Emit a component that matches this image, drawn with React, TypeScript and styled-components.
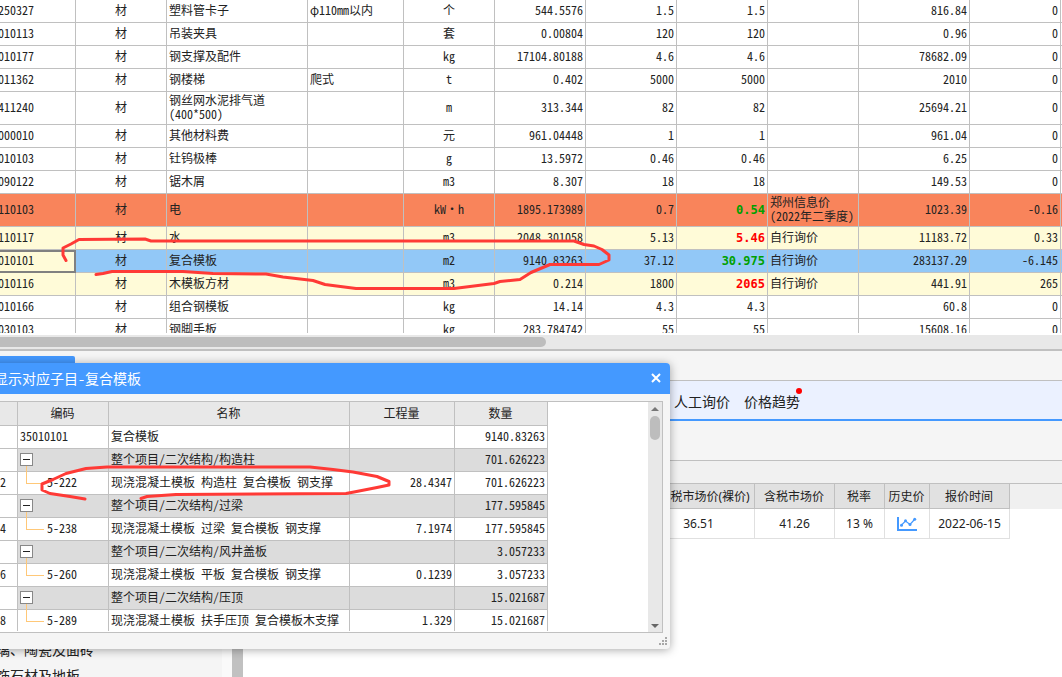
import React from "react";
import styled, { createGlobalStyle, css } from "styled-components";

const line = "#c0c0c0";
const blue = "#4499ff";
const gridFont = `"Noto Sans Mono CJK SC", "Liberation Mono", "Noto Sans CJK SC", monospace`;

const GlobalStyle = createGlobalStyle`
  * { box-sizing: border-box; }
  body { margin: 0; overflow: hidden; background: #fff; }
  button { font: inherit; padding: 0; cursor: pointer; }
  table { border-collapse: separate; border-spacing: 0; table-layout: fixed; }
`;

const Page = styled.main`
  position: relative;
  display: flex;
  flex-direction: column;
  height: 100vh;
  min-height: 660px;
  overflow: hidden;
  color: #222;
  font: 12px/14px ${gridFont};
`;

/* ---------- material grid ---------- */

const GridPane = styled.section`
  flex: none;
  height: 351px;
  display: flex;
  flex-direction: column;
  border-bottom: 2px solid ${line};
  background: #fff;
`;

const GridClip = styled.div`
  height: 333px;
  margin-bottom: 2px;
  overflow: hidden;
`;

const MaterialTable = styled.table`
  width: calc(100% + 4px);
  margin-left: -4px;
`;

type Tone = "plain" | "orange" | "yellow" | "selected";
const tones: Record<Tone, string> = {
  plain: "#ffffff",
  orange: "#f9845b",
  yellow: "#fffbd8",
  selected: "#92c8f7",
};

const MaterialRow = styled.tr<{ $tone: Tone; $tall?: boolean }>`
  height: ${(p) => (p.$tall ? 33 : 23)}px;
  background: ${(p) => tones[p.$tone]};
`;

const Cell = styled.td<{ $align?: "left" | "center" | "right"; $active?: boolean }>`
  padding: 0 2px 2px;
  border-right: 1px solid ${line};
  border-bottom: 1px solid ${line};
  text-align: ${(p) => p.$align ?? "left"};
  white-space: pre;
  ${(p) =>
    p.$active &&
    css`
      background: ${tones.yellow};
      outline: 2px solid #808080;
      outline-offset: -2px;
    `}
`;

const Filler = styled.td`
  padding: 0;
  border-bottom: 1px solid ${line};
`;

const Price = styled.strong<{ $up: boolean }>`
  font: bold 12px/14px "DejaVu Sans Mono", "Liberation Mono", monospace;
  color: ${(p) => (p.$up ? "#ff0000" : "#00a000")};
`;

const HTrack = styled.div`
  flex: 1;
  padding: 2px 0;
  background: #e8e8e8;
`;

const HThumb = styled.div`
  width: 546px;
  height: 10px;
  border-radius: 0 5px 5px 0;
  background: #bdbdbd;
`;

interface Material {
  code: string;
  name: string;
  spec?: string;
  unit: string;
  qty: string;
  budget: string;
  market: string;
  trend?: "up" | "down";
  source?: string;
  total: string;
  diff: string;
  tone?: Tone;
  tall?: boolean;
}

const materials: Material[] = [
  { code: "250327", name: "塑料管卡子", spec: "φ110mm以内", unit: "个", qty: "544.5576", budget: "1.5", market: "1.5", total: "816.84", diff: "0" },
  { code: "010113", name: "吊装夹具", unit: "套", qty: "0.00804", budget: "120", market: "120", total: "0.96", diff: "0" },
  { code: "010177", name: "钢支撑及配件", unit: "kg", qty: "17104.80188", budget: "4.6", market: "4.6", total: "78682.09", diff: "0" },
  { code: "011362", name: "钢楼梯", spec: "爬式", unit: "t", qty: "0.402", budget: "5000", market: "5000", total: "2010", diff: "0" },
  { code: "411240", name: "钢丝网水泥排气道\n(400*500)", unit: "m", qty: "313.344", budget: "82", market: "82", total: "25694.21", diff: "0", tall: true },
  { code: "000010", name: "其他材料费", unit: "元", qty: "961.04448", budget: "1", market: "1", total: "961.04", diff: "0" },
  { code: "010103", name: "钍钨极棒", unit: "g", qty: "13.5972", budget: "0.46", market: "0.46", total: "6.25", diff: "0" },
  { code: "090122", name: "锯木屑", unit: "m3", qty: "8.307", budget: "18", market: "18", total: "149.53", diff: "0" },
  { code: "110103", name: "电", unit: "kW·h", qty: "1895.173989", budget: "0.7", market: "0.54", trend: "down", source: "郑州信息价\n(2022年二季度)", total: "1023.39", diff: "-0.16", tone: "orange", tall: true },
  { code: "110117", name: "水", unit: "m3", qty: "2048.301058", budget: "5.13", market: "5.46", trend: "up", source: "自行询价", total: "11183.72", diff: "0.33", tone: "yellow" },
  { code: "010101", name: "复合模板", unit: "m2", qty: "9140.83263", budget: "37.12", market: "30.975", trend: "down", source: "自行询价", total: "283137.29", diff: "-6.145", tone: "selected" },
  { code: "010116", name: "木模板方材", unit: "m3", qty: "0.214", budget: "1800", market: "2065", trend: "up", source: "自行询价", total: "441.91", diff: "265", tone: "yellow" },
  { code: "010166", name: "组合钢模板", unit: "kg", qty: "14.14", budget: "4.3", market: "4.3", total: "60.8", diff: "0" },
  { code: "030103", name: "钢脚手板", unit: "kg", qty: "283.784742", budget: "55", market: "55", total: "15608.16", diff: "0" },
];

function Materials() {
  return (
    <GridPane>
      <GridClip>
        <MaterialTable>
          <colgroup>
            {[80, 91, 141, 96, 91, 91, 91, 91, 91, 111, 91].map((w, i) => (
              <col key={i} width={w} />
            ))}
            <col />
          </colgroup>
          <tbody>
            {materials.map((m) => (
              <MaterialRow key={m.code} $tone={m.tone ?? "plain"} $tall={m.tall}>
                <Cell $active={m.tone === "selected"}>{m.code}</Cell>
                <Cell $align="center">材</Cell>
                <Cell>{m.name}</Cell>
                <Cell>{m.spec}</Cell>
                <Cell $align="center">{m.unit}</Cell>
                <Cell $align="right">{m.qty}</Cell>
                <Cell $align="right">{m.budget}</Cell>
                <Cell $align="right">
                  {m.trend ? <Price $up={m.trend === "up"}>{m.market}</Price> : m.market}
                </Cell>
                <Cell>{m.source}</Cell>
                <Cell $align="right">{m.total}</Cell>
                <Cell $align="right">{m.diff}</Cell>
                <Filler />
              </MaterialRow>
            ))}
          </tbody>
        </MaterialTable>
      </GridClip>
      <HTrack>
        <HThumb />
      </HTrack>
    </GridPane>
  );
}

/* ---------- lower workspace ---------- */

const Workspace = styled.section`
  flex: 1;
  min-height: 0;
  display: flex;
  background: #f5f5f5;
  font: 12px/16px "Noto Sans", "Noto Sans CJK SC", sans-serif;
`;

const Sidebar = styled.aside`
  flex: none;
  width: 243px;
  padding-top: 5px;
  display: grid;
  grid-template: 30px 1fr / 222px 10px 11px;
  overflow: hidden;
`;

const SideTab = styled.button`
  grid-column: 1 / -1;
  width: 75px;
  border: 0;
  border-radius: 0 2px 0 0;
  background: ${blue};
`;

const Categories = styled.ul`
  margin: 0 0 0 -18px;
  padding: 250px 0 0;
  list-style: none;
  font: 14px/26px "Noto Sans CJK SC", sans-serif;
  white-space: nowrap;
`;

const SideGap = styled.div`
  background: #fafafa;
`;

const SideThumb = styled.div`
  background: #c1c1c1;
`;

const Inquiry = styled.div`
  flex: 1;
  min-width: 0;
  padding-top: 29px;
  display: flex;
  flex-direction: column;
`;

const Tabs = styled.nav`
  display: flex;
  gap: 14px;
  height: 41px;
  padding-top: 2px;
  padding-left: 431px;
  border-top: 1px solid ${line};
  border-bottom: 2px solid ${blue};
  background: #ebf1ff;
`;

const Tab = styled.button`
  position: relative;
  border: 0;
  background: none;
  color: #222;
  font: 14px/20px "Noto Sans CJK SC", sans-serif;
  white-space: nowrap;
`;

const Dot = styled.span`
  position: absolute;
  top: 5px;
  right: -2px;
  width: 6px;
  height: 6px;
  border-radius: 50%;
  background: #ff0000;
`;

const ToolStrip = styled.div`
  height: 39px;
`;

const InfoStrip = styled.div`
  height: 23px;
  border-top: 1px solid ${line};
  background: #f1f1f1;
`;

const PriceArea = styled.div`
  flex: 1;
  background: linear-gradient(#f0f0f0 25px, #fff 25px);
  border-top: 1px solid ${line};
  overflow: hidden;
`;

const PriceTable = styled.table`
  width: 367px;
  margin-left: 400px;
  text-align: center;
`;

const PriceHead = styled.th`
  height: 25px;
  padding: 2px 1px 0 0;
  border-right: 1px solid ${line};
  border-bottom: 1px solid ${line};
  background: #e1e1e1;
  font-weight: normal;
  white-space: nowrap;
`;

const PriceCell = styled.td`
  height: 30px;
  padding: 0;
  border-right: 1px solid #e0e0e0;
  border-bottom: 1px solid #e0e0e0;
  background: #fff;
`;

const IconButton = styled.button`
  display: inline-flex;
  vertical-align: middle;
  border: 0;
  background: none;
`;

function ChartIcon() {
  return (
    <svg width="20" height="15" viewBox="0 0 20 15" fill="none" stroke={blue}>
      <path d="M1 0V13H20" strokeWidth="2" />
      <path d="M4.500 8L8.500 4L13 7.500L17.500 2.500" strokeWidth="1.200" />
      <g fill={blue} stroke="none">
        <circle cx="4.500" cy="8.200" r="1.500" />
        <circle cx="8.500" cy="3.800" r="1.500" />
        <circle cx="13" cy="7.500" r="1.500" />
        <circle cx="17.700" cy="2.300" r="1.500" />
      </g>
    </svg>
  );
}

function Lower() {
  return (
    <Workspace>
      <Sidebar>
        <SideTab aria-label="材料分类" />
        <Categories>
          <li>玻璃、陶瓷及面砖</li>
          <li>装饰石材及地板</li>
        </Categories>
        <SideGap />
        <SideThumb />
      </Sidebar>
      <Inquiry>
        <Tabs>
          <Tab>人工询价</Tab>
          <Tab>
            价格趋势
            <Dot />
          </Tab>
        </Tabs>
        <ToolStrip />
        <InfoStrip />
        <PriceArea>
          <PriceTable>
            <colgroup>
              {[112, 80, 50, 45, 80].map((w, i) => (
                <col key={i} width={w} />
              ))}
            </colgroup>
            <thead>
              <tr>
                <PriceHead>不含税市场价(裸价)</PriceHead>
                <PriceHead>含税市场价</PriceHead>
                <PriceHead>税率</PriceHead>
                <PriceHead>历史价</PriceHead>
                <PriceHead>报价时间</PriceHead>
              </tr>
            </thead>
            <tbody>
              <tr>
                <PriceCell>36.51</PriceCell>
                <PriceCell>41.26</PriceCell>
                <PriceCell>13 %</PriceCell>
                <PriceCell>
                  <IconButton aria-label="历史价">
                    <ChartIcon />
                  </IconButton>
                </PriceCell>
                <PriceCell>2022-06-15</PriceCell>
              </tr>
            </tbody>
          </PriceTable>
        </PriceArea>
      </Inquiry>
    </Workspace>
  );
}

/* ---------- floating dialog ---------- */

const Dialog = styled.section`
  position: absolute;
  top: 363px;
  left: -20px;
  width: 690px;
  height: 286px;
  display: flex;
  flex-direction: column;
  border-radius: 4px;
  background: #f5f5f5;
  box-shadow: 0 1px 10px rgba(0, 0, 0, 0.35);
`;

const TitleBar = styled.header`
  display: flex;
  align-items: center;
  justify-content: space-between;
  height: 31px;
  padding: 0 9px 2px 14px;
  border-radius: 4px 4px 0 0;
  background: ${blue};
  color: #fff;
`;

const Title = styled.h2`
  margin: 0;
  font: 14px/20px ${gridFont};
`;

const CloseButton = styled.button`
  display: flex;
  border: 0;
  background: none;
`;

const DialogBody = styled.div`
  display: flex;
  justify-content: space-between;
  height: 232px;
  margin: 7px 7px 0 0;
  border: 1px solid ${line};
  background: #fff;
`;

const SubClip = styled.div`
  height: 229px;
  overflow: hidden;
`;

const SubTable = styled.table`
  width: 567px;
`;

const SubHead = styled.th`
  height: 24px;
  padding: 0 1px 2px 0;
  border-right: 1px solid ${line};
  border-bottom: 1px solid ${line};
  background: #e8e8e8;
  font-weight: normal;
`;

const SubRow = styled.tr<{ $group: boolean }>`
  height: 23px;
  background: ${(p) => (p.$group ? "#dcdcdc" : "#fff")};
`;

const RowNo = styled(Cell)`
  padding-right: 11px;
  background: #fff;
`;

const TreeChild = styled.div`
  position: relative;
  padding-left: 27px;

  &::before {
    content: "";
    position: absolute;
    left: 6px;
    top: -9px;
    width: 17px;
    height: 17px;
    border: solid #ffc878;
    border-width: 0 0 1px 1px;
  }
`;

const Toggle = styled.button`
  display: flex;
  width: 13px;
  height: 13px;
  align-items: center;
  justify-content: center;
  border: 1px solid #888;
  background: #fff;

  &::before {
    content: "";
    width: 7px;
    height: 1px;
    background: #222;
  }
`;

const VTrack = styled.div`
  display: flex;
  flex-direction: column;
  align-items: center;
  width: 14px;
  padding: 5px 0 4px;
  background: #e8e8e8;
`;

const VThumb = styled.div`
  width: 10px;
  height: 24px;
  margin: 5px 0 auto;
  border-radius: 5px;
  background: #bdbdbd;
`;

const Grip = styled.svg`
  position: absolute;
  right: 3px;
  bottom: 4px;
`;

interface SubItem {
  no?: string;
  code?: string;
  name: string;
  amount?: string;
  qty: string;
  kind: "root" | "group" | "item";
}

const subItems: SubItem[] = [
  { kind: "root", code: "35010101", name: "复合模板", qty: "9140.83263" },
  { kind: "group", name: "整个项目/二次结构/构造柱", qty: "701.626223" },
  { kind: "item", no: "2", code: "5-222", name: "现浇混凝土模板 构造柱 复合模板 钢支撑", amount: "28.4347", qty: "701.626223" },
  { kind: "group", name: "整个项目/二次结构/过梁", qty: "177.595845" },
  { kind: "item", no: "4", code: "5-238", name: "现浇混凝土模板 过梁 复合模板 钢支撑", amount: "7.1974", qty: "177.595845" },
  { kind: "group", name: "整个项目/二次结构/风井盖板", qty: "3.057233" },
  { kind: "item", no: "6", code: "5-260", name: "现浇混凝土模板 平板 复合模板 钢支撑", amount: "0.1239", qty: "3.057233" },
  { kind: "group", name: "整个项目/二次结构/压顶", qty: "15.021687" },
  { kind: "item", no: "8", code: "5-289", name: "现浇混凝土模板 扶手压顶 复合模板木支撑", amount: "1.329", qty: "15.021687" },
];

function SubItemDialog() {
  return (
    <Dialog role="dialog" aria-labelledby="dialog-title">
      <TitleBar>
        <Title id="dialog-title">显示对应子目-复合模板</Title>
        <CloseButton aria-label="关闭">
          <svg width="10" height="10" viewBox="0 0 10 10" stroke="#fff" strokeWidth="2">
            <path d="M1 1L9 9M9 1L1 9" />
          </svg>
        </CloseButton>
      </TitleBar>
      <DialogBody>
        <SubClip>
          <SubTable>
            <colgroup>
              {[37, 91, 241, 105, 93].map((w, i) => (
                <col key={i} width={w} />
              ))}
            </colgroup>
            <thead>
              <tr>
                <SubHead />
                <SubHead>编码</SubHead>
                <SubHead>名称</SubHead>
                <SubHead>工程量</SubHead>
                <SubHead>数量</SubHead>
              </tr>
            </thead>
            <tbody>
              {subItems.map((s, i) => (
                <SubRow key={i} $group={s.kind === "group"}>
                  <RowNo $align="right">{s.no}</RowNo>
                  <Cell>
                    {s.kind === "group" && <Toggle aria-label="折叠" />}
                    {s.kind === "item" && <TreeChild>{s.code}</TreeChild>}
                    {s.kind === "root" && s.code}
                  </Cell>
                  <Cell>{s.name}</Cell>
                  <Cell $align="right">{s.amount}</Cell>
                  <Cell $align="right">{s.qty}</Cell>
                </SubRow>
              ))}
            </tbody>
          </SubTable>
        </SubClip>
        <VTrack>
          <svg width="8" height="4" viewBox="0 0 8 4">
            <path d="M0 4L4 0L8 4Z" fill="#777" />
          </svg>
          <VThumb />
          <svg width="8" height="4" viewBox="0 0 8 4">
            <path d="M0 0L4 4L8 0Z" fill="#666" />
          </svg>
        </VTrack>
      </DialogBody>
      <Grip width="8" height="8" viewBox="0 0 8 8" fill="#a8a8a8">
        <path d="M6 0h2v2h-2zM3 3h2v2h-2zM6 3h2v2h-2zM0 6h2v2h-2zM3 6h2v2h-2zM6 6h2v2h-2z" />
      </Grip>
    </Dialog>
  );
}

/* ---------- red pen marks ---------- */

const PenLayer = styled.svg`
  position: absolute;
  top: 0;
  left: 0;
  pointer-events: none;
`;

function PenMarks() {
  return (
    <PenLayer
      width="660"
      height="510"
      viewBox="0 0 660 510"
      fill="none"
      stroke="#ff3a36"
      strokeWidth="3"
      strokeLinecap="round"
      strokeLinejoin="round"
    >
      <path d="M66 260.500L63 255V248L71 244L79 239.500L145 239L151 241H574L584 244.500L594 246L602 249.500L609 255V260L599 264.500H550L531 272.500L520 279.500L500 281.500L494 283.500L474 286L454 288.500H356L325 284.500L313 280.500L283 277L266 274L213 273.500L183 271.500H112L103 273.500L96 274.500" />
      <path d="M85 499L70 496.500L50 493.500L42 490V484L53 479.500L66 473.500L86 468.500L107 467H310L333 469.500L353 472L377 476.500L389 481.500V485L377 487.500L354 492L346 493.500L176 494.500L147 496.500L141 498.500" />
    </PenLayer>
  );
}

export default function App() {
  return (
    <Page>
      <GlobalStyle />
      <Materials />
      <Lower />
      <SubItemDialog />
      <PenMarks />
    </Page>
  );
}
